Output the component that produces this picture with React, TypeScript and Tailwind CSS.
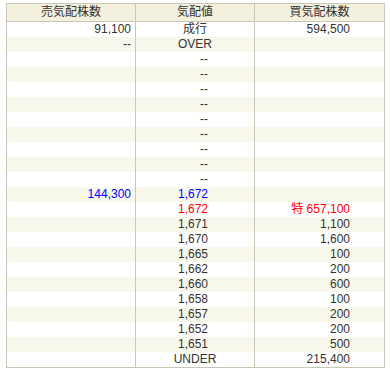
type Row = {
  sell?: string
  sellBlue?: boolean
  price: string
  priceColor?: 'blue' | 'red'
  buy?: string
  buyRed?: boolean
}

const rows: Row[] = [
  { sell: '91,100', price: '成行', buy: '594,500' },
  { sell: '--', price: 'OVER' },
  ...Array.from({ length: 9 }, () => ({ price: '--' })),
  { sell: '144,300', sellBlue: true, price: '1,672', priceColor: 'blue' },
  { price: '1,672', priceColor: 'red', buy: '特 657,100', buyRed: true },
  { price: '1,671', buy: '1,100' },
  { price: '1,670', buy: '1,600' },
  { price: '1,665', buy: '100' },
  { price: '1,662', buy: '200' },
  { price: '1,660', buy: '600' },
  { price: '1,658', buy: '100' },
  { price: '1,657', buy: '200' },
  { price: '1,652', buy: '200' },
  { price: '1,651', buy: '500' },
  { price: 'UNDER', buy: '215,400' },
]

// 成行 / OVER / UNDER は中央、数値と -- は右寄せ
const isLabel = (p: string) => p === '成行' || p === 'OVER' || p === 'UNDER'

export default function App() {
  return (
    <div
      className="w-[390px] h-[373px] bg-white pt-[3px] pl-[6px]"
      style={{ fontFamily: '"Liberation Sans", "Noto Sans CJK JP", sans-serif' }}
    >
      <div className="w-[379px] border border-[#c9c8b8] text-[12px] text-[#333]">
        {/* 見出し */}
        <div className="flex h-[18px] bg-[#f3f1de] border-b border-[#c9c8b8] text-[#333] leading-[17px]">
          <div className="w-[128px] text-center">売気配株数</div>
          <div className="w-[119px] border-l border-[#c9c8b8] text-center">気配値</div>
          <div className="w-[130px] border-l border-[#c9c8b8] text-center">買気配株数</div>
        </div>

        {rows.map((r, i) => (
          <div key={i} className={`flex h-[15px] leading-[15px] ${i % 2 === 1 ? 'bg-[#f7f7ec]' : 'bg-white'}`}>
            <div className={`w-[128px] text-right pr-[4px] ${r.sellBlue ? 'text-[#0000ff]' : ''}`}>
              {r.sell ?? ''}
            </div>
            <div
              className={`w-[119px] border-l border-[#c9c8b8] ${isLabel(r.price) ? 'text-center' : 'text-right pr-[46px]'} ${
                r.priceColor === 'blue' ? 'text-[#0000ff]' : r.priceColor === 'red' ? 'text-[#ff0000]' : ''
              }`}
            >
              {r.price}
            </div>
            <div className={`w-[130px] border-l border-[#c9c8b8] text-right pr-[34px] ${r.buyRed ? 'text-[#ff0000]' : ''}`}>
              {r.buy ?? ''}
            </div>
          </div>
        ))}
      </div>
    </div>
  )
}
